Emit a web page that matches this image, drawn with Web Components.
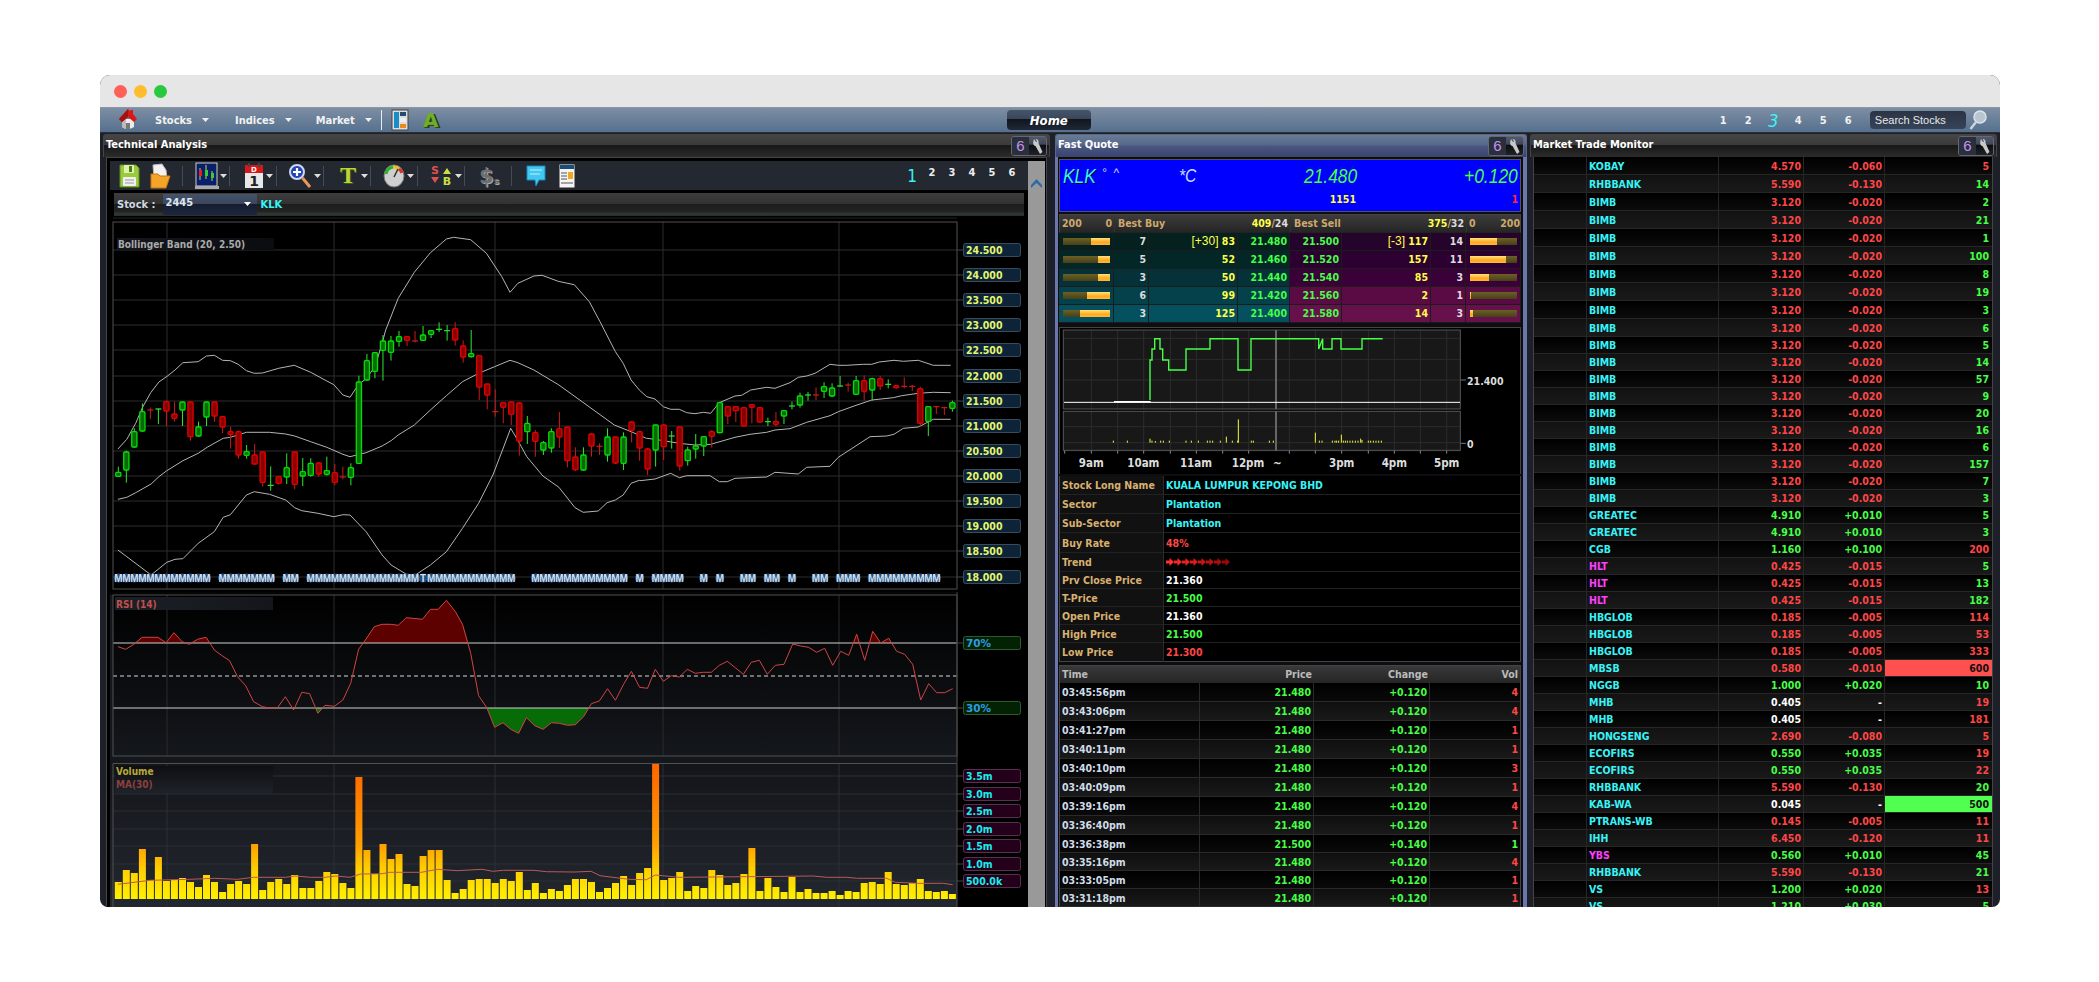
<!DOCTYPE html>
<html><head><meta charset="utf-8"><title>Technical Analysis</title>
<style>
html,body{margin:0;background:#fff;overflow:hidden}
body{padding:75px 0 0 100px;font:bold 10.5px "DejaVu Sans Condensed","DejaVu Sans",sans-serif;color:#ddd}
</style></head><body>
<app-window>
  <nav-bar></nav-bar>
  <panel-row>
    <panel-box label="Technical Analysis" style="width:947px"><ta-body>
      <ta-toolbar></ta-toolbar>
      <stock-row></stock-row>
      <price-chart></price-chart>
      <rsi-chart></rsi-chart>
      <vol-chart></vol-chart>
    </ta-body></panel-box>
    <panel-box label="Fast Quote" variant="blue" style="width:472px;margin-left:5px"><fq-body>
      <quote-head></quote-head>
      <depth-table></depth-table>
      <intraday-chart></intraday-chart>
      <info-table></info-table>
      <trade-table></trade-table>
    </fq-body></panel-box>
    <panel-box label="Market Trade Monitor" style="width:467px;margin-left:3px"><monitor-table></monitor-table></panel-box>
  </panel-row>
</app-window>
<script>
function def(name,css,html){
  customElements.define(name,class extends HTMLElement{
    constructor(){super();const r=this.attachShadow({mode:'open'});
      r.innerHTML='<style>'+css+'</style>'+(typeof html==='function'?html(this):html);}
    connectedCallback(){ if(typeof html==='function'){this.shadowRoot.innerHTML='<style>'+css+'</style>'+html(this);} }
  });
}
const RED='#ff4646',GRN='#46ff46',CY='#38f4f8',YEL='#ffff46',MAG='#ff40ff',TAN='#d8b070';

/* ---------- icons ---------- */
const I={
house:`<svg width="22" height="24" viewBox="0 0 22 24"><path d="M5 11h12v8q-6 4-12 0z" fill="#ececec"/><path d="M5 11h4v10q-2-.5-4-2z" fill="#bbb"/><path d="M9 21v-6h4v6z" fill="#777"/><path d="M11 1l2 2 1-1h2v4l4 5-3 3-6-5-6 5-3-3z" fill="#d81818"/><path d="M11 1L2 11l3 3 6-5z" fill="#a81010"/></svg>`,
panel:`<svg width="18" height="22" viewBox="0 0 18 22"><rect x="1" y="1" width="16" height="20" fill="#ddd" stroke="#444"/><rect x="3" y="3" width="5" height="16" fill="#1a8cc8"/><rect x="9" y="3" width="6" height="4" fill="#2a4a6a"/><rect x="9" y="9" width="6" height="4" fill="#eee"/><rect x="9" y="15" width="6" height="4" fill="#e88a20"/></svg>`,
save:`<svg width="22" height="26" viewBox="0 0 22 26"><path d="M2 2h16l3 3v19H2z" fill="#9acb3c" stroke="#5c8a1e"/><rect x="6" y="2" width="10" height="8" fill="#dff0b0"/><rect x="11" y="3" width="3" height="6" fill="#4f7a18"/><rect x="5" y="14" width="13" height="9" rx="1" fill="#f0f0f0"/><path d="M7 17h9M7 20h9" stroke="#999"/></svg>`,
open:`<svg width="24" height="28" viewBox="0 0 24 28"><path d="M4 3l9-1 4 6 1 9H5z" fill="#f2f2f2" stroke="#bbb"/><path d="M2 26V12h7l2 2h10l-4 12z" fill="#f4a428" stroke="#c47a10"/></svg>`,
chart:`<svg width="24" height="28" viewBox="0 0 24 28"><rect x="1" y="1" width="21" height="23" fill="#0a1f6a" stroke="#ccc"/><path d="M5 6v12M11 3v14M17 9v10" stroke="#d0d040"/><rect x="4" y="8" width="3" height="6" fill="#e02020"/><rect x="10" y="8" width="3" height="6" fill="#30d030"/><rect x="16" y="11" width="3" height="5" fill="#30d030"/><rect x="0" y="24" width="24" height="3" fill="#aaa"/></svg>`,
cal:`<svg width="20" height="28" viewBox="0 0 20 28"><rect x="1" y="8" width="18" height="18" fill="#e8e8e8"/><rect x="1" y="3" width="18" height="8" fill="#d81818"/><rect x="4" y="1" width="2" height="4" fill="#444"/><rect x="14" y="1" width="2" height="4" fill="#444"/><text x="10" y="10" text-anchor="middle" font-size="7" fill="#fff" font-family="DejaVu Sans">D</text><text x="10" y="24" text-anchor="middle" font-size="14" fill="#222" font-family="DejaVu Sans">1</text></svg>`,
zoom:`<svg width="24" height="28" viewBox="0 0 24 28"><circle cx="9" cy="10" r="7" fill="#2244b8" stroke="#cfd8f0" stroke-width="2"/><path d="M9 6v8M5 10h8" stroke="#fff" stroke-width="2.200"/><path d="M14.500 16l7.500 9" stroke="#e89858" stroke-width="3"/></svg>`,
gauge:`<svg width="22" height="24" viewBox="0 0 22 24"><ellipse cx="11" cy="12" rx="10" ry="11" fill="#cfcfcf" stroke="#777"/><path d="M3 10A8.500 8.500 0 0 1 10 3" stroke="#30b030" stroke-width="3" fill="none"/><path d="M10 3A8.500 8.500 0 0 1 16 5" stroke="#e8c020" stroke-width="3" fill="none"/><path d="M16 5A8.500 8.500 0 0 1 19 9" stroke="#e03020" stroke-width="3" fill="none"/><path d="M11 13L15 5" stroke="#333" stroke-width="1.500"/></svg>`,
note:`<svg width="16" height="24" viewBox="0 0 16 24"><rect width="15" height="23" x=".5" y=".5" fill="#f4f4f4"/><rect x="1" y="1" width="14" height="4" fill="#1a4e78"/><path d="M2 9h6M2 12h6M2 15h6M2 19h12" stroke="#555"/><rect x="9" y="8" width="5" height="7" fill="#f0a820"/></svg>`,
bubble:`<svg width="20" height="24" viewBox="0 0 20 24"><path d="M1 2h18v14h-6l-3 6-1-6H1z" fill="#40c8f0" stroke="#1a88c0"/><path d="M4 6h12M4 10h10" stroke="#bff0ff"/></svg>`,
wrench:`<svg width="13" height="17" viewBox="0 0 13 17"><path d="M3 1l2 3 1-.500L4.500 1C7 1 8 3 7.500 5l4 9-2.500 2-4.500-8C3 8 1 6 3 1z" fill="#c8c8c8"/></svg>`,
lens:`<svg width="18" height="20" viewBox="0 0 18 20"><circle cx="11" cy="7" r="6" fill="#b8c4d0" stroke="#dde4ea" stroke-width="1.500"/><path d="M7 12L1.500 19" stroke="#cbd3da" stroke-width="2.500"/></svg>`,
caret:`<svg width="7" height="4" viewBox="0 0 7 4"><path d="M0 0h7L3.500 4z" fill="currentColor"/></svg>`
};

/* ---------- window shell ---------- */
def('app-window',`:host{display:block;width:1900px;height:832px;border-radius:10px 10px 8px 8px;overflow:hidden;background:#1d2028}
.tb{height:32px;background:#e6e6e6;display:flex;align-items:center;gap:7px;padding-left:14px;box-sizing:border-box}
.d{width:13px;height:13px;border-radius:50%}`,
`<div class="tb"><span class="d" style="background:#ff6058"></span><span class="d" style="background:#ffbd2e"></span><span class="d" style="background:#28c940"></span></div><slot></slot>`);

def('nav-bar',`:host{display:flex;align-items:center;height:26px;box-sizing:border-box;border-top:1px solid #8b97a6;border-bottom:1px solid #2a2f38;background:linear-gradient(#7d8ea3,#55708e);color:#f2f2f2;font-size:11px}
.home{margin-left:17px;width:22px;height:24px}
.m{display:flex;align-items:center;gap:8px;white-space:nowrap}
.m svg{color:#eee}
.sep{width:1px;height:20px;background:#e8edf2}
.h{width:84px;height:20px;border-radius:4px;background:linear-gradient(#46546a 0,#3a465a 46%,#11151d 47%,#202838);color:#fff;font-style:italic;font-size:13px;display:flex;align-items:center;justify-content:center;box-sizing:border-box}
.n{display:flex;align-items:center;width:25px;justify-content:center}
.s{width:96px;height:18px;border-radius:4px;background:linear-gradient(#2b3444,#364358);color:#e8e8e8;font-weight:normal;font-size:11px;line-height:18px;padding-left:5px;box-sizing:border-box;font-family:"Liberation Sans",sans-serif}
span.a{font:bold 20px/24px "DejaVu Sans",sans-serif;color:#6fae28;text-shadow:1px 1px 0 #2c4a10,2px 1px 0 #1d330a}`,
`<span class="home">${I.house}</span>
<span class="m" style="margin-left:16px">Stocks <span style="margin-left:2px;display:flex">${I.caret}</span></span>
<span class="m" style="margin-left:26px">Indices <span style="margin-left:2px;display:flex">${I.caret}</span></span>
<span class="m" style="margin-left:24px">Market <span style="margin-left:2px;display:flex">${I.caret}</span></span>
<span class="sep" style="margin-left:9px"></span>
<span style="margin-left:9px;display:flex">${I.panel}</span>
<span class="a" style="margin-left:13px;width:18px;text-align:center">A</span>
<span class="h" style="margin-left:567px">Home</span>
<span style="margin-left:620px;display:flex"><span class="n">1</span><span class="n">2</span><span class="n" style="color:${CY};font-size:18px;font-style:italic;font-weight:normal">3</span><span class="n">4</span><span class="n">5</span><span class="n">6</span></span>
<span class="s" style="margin-left:9px">Search Stocks</span>
<span style="margin-left:3px;display:flex">${I.lens}</span>`);

def('panel-row',`:host{display:flex;padding:1px 3px 0;height:773px}`,`<slot></slot>`);

def('panel-box',`:host{display:flex;flex-direction:column;box-sizing:border-box;flex:none;height:773px;overflow:hidden}
.h{height:23px;flex:none;box-sizing:border-box;display:flex;align-items:flex-start;justify-content:space-between;padding:1px 2px 0 2px;color:#fff;font-size:11px;line-height:17px;border:1px solid #444;border-bottom:0;border-radius:3px 3px 0 0;background:linear-gradient(#454545 0,#3a3a3a 45%,#171717 48%,#2c2c2c 100%)}
:host([variant=blue]) .h{background:linear-gradient(#6a7b96,#56688a 45%,#4a5580 50%,#3a4470);border-color:#5a6888}
.b{display:flex;width:36px;height:20px;box-sizing:border-box;border:1px solid #667;border-radius:3px;overflow:hidden}
.b i{width:17px;text-align:center;font:normal 15px/18px "Liberation Sans",sans-serif;color:#c493ef;background:#2a2f3c}
.b u{flex:1;display:flex;align-items:center;justify-content:center;background:linear-gradient(#50586a,#40485a 40%,#0a0d14 45%,#222)}
.c{flex:1;min-height:0;display:flex;flex-direction:column}`,
h=>`<div class="h"><span class="t">${h.getAttribute('label')||''}</span><span class="b"><i>6</i><u>${I.wrench}</u></span></div><div class="c"><slot></slot></div>`);

/* ---------- technical analysis ---------- */
def('ta-body',`:host{display:flex;flex:1;min-height:0;background:#000;box-sizing:border-box;margin:0 3px;border:1px solid #444;border-bottom:0;padding:3px 1px 0 3px}
.main{width:918px;display:flex;flex-direction:column;flex:none}
.sb{width:17px;background:#999;flex:none;padding-top:17px;box-sizing:border-box;text-align:center}`,
`<div class="main"><slot></slot></div><div class="sb"><svg width="11" height="9" viewBox="0 0 11 9"><path d="M5.500 0L11 6v3L5.500 4 0 9V6z" fill="#2f6aa5"/></svg></div>`);

function toolbar(){
  const sb=`<svg width="22" height="24" viewBox="0 0 22 24"><text x="5" y="10" text-anchor="middle" font-family="DejaVu Sans" font-weight="bold" font-size="11" fill="#e05050">S</text><path d="M1 13h8l-4 6z" fill="#e05050"/><path d="M13 10h8l-4-6z" fill="#c8e040"/><text x="17" y="21" text-anchor="middle" font-family="DejaVu Sans" font-weight="bold" font-size="11" fill="#c8e040">B</text></svg>`;
  const items=[[I.save,129,22],[I.open,161,24],['|',182],[I.chart,207,24],['v',223],['|',229],[I.cal,254,20],['v',269],['|',276],[I.zoom,300,24],['v',317],['|',323],['T',348,18],['v',364],['|',370],[I.gauge,394,22],['v',410],['|',417],[sb,441,22],['v',458],['|',464],['$',489,26],['|',511],[I.bubble,535.5,20],[I.note,567,16]];
  let cur=110,h='';
  for(const it of items){
    const kind=it[0];let w=it[2]||(kind=='v'?7:1),left=it[1]-w/2,ml=left-cur;cur=left+w;
    const st=`margin-left:${ml}px;width:${w}px`;
    if(kind=='|')h+=`<span class="sp" style="${st}"></span>`;
    else if(kind=='v')h+=`<span class="cr" style="${st}">${I.caret}</span>`;
    else if(kind=='T')h+=`<span class="i tt" style="${st}">T</span>`;
    else if(kind=='$')h+=`<span class="i dl" style="${st}">$<small>s</small></span>`;
    else h+=`<span class="i" style="${st}">${kind}</span>`;
  }
  return h+`<span class="nums"><b>1</b><span>2</span><span>3</span><span>4</span><span>5</span><span>6</span></span>`;
}
def('ta-toolbar',`:host{display:flex;align-items:center;height:29px;flex:none;background:#232831;color:#eee;font-size:11px}
.i{display:flex;align-items:center;justify-content:center;flex:none;height:29px}
.cr{display:flex;color:#ddd;flex:none}
.sp{height:20px;background:#454b55;flex:none}
.nums{margin-left:auto;display:flex;margin-right:6px}
.nums span{width:20px;text-align:center}
.nums b{width:20px;text-align:center;color:${CY};font-size:17px;font-weight:normal;line-height:20px}
.tt{font:bold 24px "Liberation Serif",serif;color:#b8d838;text-shadow:1px 1px 0 #4a5a10}
.dl{font:bold 21px "DejaVu Sans",sans-serif;color:#6e6e6e;text-shadow:1px 1px 0 #aaa}
.dl small{font-size:9px;margin-top:10px}`,toolbar);

def('stock-row',`:host{display:flex;align-items:center;height:23px;flex:none;margin:3px 4px 0 4px;background:linear-gradient(#3d3d3d 0,#323232 48%,#1d1d1d 50%,#222 80%,#2d3a36 90%,#2c2c2c);color:#cfd8e2;font-size:11px;box-sizing:border-box}
.s{width:94px;height:21px;margin-left:7px;background:linear-gradient(#44526a,#3a475e 46%,#141c2e 48%,#1e2740);display:flex;align-items:flex-start;justify-content:space-between;padding:2px 6px 0 3px;box-sizing:border-box;color:#dfe6ee;line-height:13px}
.s svg{margin-top:6px;color:#fff}
.k{color:${CY};margin-left:4px}
.l{margin-left:3px}`,
`<span class="l">Stock :</span><span class="s">2445 ${I.caret}</span><span class="k">KLK</span>`);

/* ------ chart data (reading coords from crops) ------ */
const zx6=z=>100+z/2.8, zx7=z=>640+z/3, zy=z=>210+z/3, ry=z=>590+z/3;
const poly=(a,b,y)=>a.map(p=>zx6(p[0]).toFixed(1)+','+y(p[1]).toFixed(1)).concat(b.map(p=>zx7(p[0]).toFixed(1)+','+y(p[1]).toFixed(1))).join(' ');
const UP=poly([[50,717],[75,688],[100,640],[120,590],[142,548],[165,516],[190,497],[210,480],[232,458],[275,455],[298,438],[320,436],[343,451],[365,452],[387,463],[410,482],[432,490],[455,489],[500,475],[544,466],[590,487],[635,513],[655,524],[680,555],[700,562],[723,525],[746,505],[770,470],[790,400],[800,360],[835,265],[880,187],[925,128],[970,87],[990,82],[1038,89],[1082,130],[1125,200],[1148,247],[1170,220],[1215,198],[1238,196],[1283,214],[1328,224],[1370,275],[1400,335],[1443,425],[1465,460],[1487,510],[1510,540]],
[[20,560],[45,567],[70,590],[92,598],[118,598],[140,608],[165,611],[190,607],[212,610],[238,578],[285,558],[305,556],[332,540],[380,532],[405,535],[450,518],[475,502],[500,498],[525,490],[570,463],[595,466],[620,466],[670,463],[695,463],[718,456],[762,451],[790,454],[835,451],[880,466],[932,466]],zy);
const MID=poly([[50,868],[75,862],[100,848],[143,822],[165,800],[187,782],[232,752],[275,730],[300,712],[345,685],[365,682],[410,667],[475,667],[520,672],[545,678],[590,695],[635,712],[680,733],[700,740],[745,728],[790,708],[815,692],[835,675],[880,645],[925,600],[970,557],[1015,515],[1060,490],[1105,470],[1148,451],[1170,458],[1215,480],[1285,525],[1350,575],[1440,645],[1487,665],[1530,685]],
[[20,685],[45,688],[118,700],[165,705],[212,703],[285,682],[330,673],[380,667],[405,660],[450,656],[500,637],[570,617],[595,605],[645,587],[695,570],[760,563],[785,557],[835,550],[880,547],[932,548]],zy);
const LOW=poly([[50,1020],[75,1040],[143,1095],[187,1057],[210,1048],[232,1046],[275,1000],[320,965],[345,922],[365,914],[410,855],[432,845],[475,853],[520,870],[545,893],[565,902],[610,910],[655,920],[680,914],[700,915],[745,965],[790,1035],[815,1065],[860,1094],[880,1097],[925,1065],[970,1025],[1015,955],[1060,880],[1100,795],[1127,720],[1150,655],[1172,695],[1195,740],[1240,798],[1285,832],[1330,893],[1353,907],[1395,903],[1420,878],[1443,870],[1465,855],[1487,820],[1510,811]],
[[0,812],[45,807],[92,790],[118,803],[140,797],[210,797],[238,815],[262,815],[285,805],[380,801],[405,787],[475,792],[500,772],[570,769],[595,742],[690,680],[740,678],[762,673],[790,655],[835,651],[880,628],[932,628]],zy);
const C=`G787,799,770,800 G726,780,722,818 G665,711,655,713 G605,663,580,665 R600,,593,627 G597,,595,642 R575,603,572,648 R612,625,575,635 G576,600,575,648 R576,680,575,692 G651,678,635,680 G576,621,575,648 R576,618,575,635 R620,651,620,670 R665,673,650,716 R665,735,662,746 G725,736,705,746 R735,762,702,764 R726,817,726,830 G826,,769,842 R800,820,798,824 G773,801,730,822 R726,823,726,838 G785,798,744,828 G760,796,745,800 R759,792,757,800 G782,793,740,797 R788,817,762,826 R801,,770,808 G773,802,760,826 G516,760,497,760 G452,510,432,512 G428,484,428,505 G393,421,375,512 G393,427,378,452 G380,394,363,410 R380,391,378,408 R393,,363,398 G375,391,348,393 G362,373,360,384 G358,,337,366 G362,,345,392 R356,390,336,407 R408,441,391,458 G431,440,360,443 R437,531,437,570 R522,555,522,598 R605,,538,620 R578,592,576,640 R576,613,575,645 R579,693,576,737 G640,665,618,702 R668,694,660,740 G698,720,693,735 G665,714,655,728 R656,681,606,714 R651,752,651,772 R741,779,712,783 G735,780,712,782 R672,708,670,740 R709,,700,735 G681,735,655,755 R681,759,680,762 G681,760,667,780 R636,661,634,697 R665,714,663,752 R717,777,714,795 G645,720,645,770 R645,710,643,750 G678,,663,716 R651,768,650,782 G720,752,710,767 G708,717,672,746 G680,708,678,738 R665,679,660,713 G578,668,575,670 R590,618,590,642 R590,602,590,636 R593,648,593,650 R584,592,583,640 R593,636,593,638 G635,,623,648 R635,643,606,650 G602,618,600,642 G588,,575,598 G558,585,548,593 G555,,546,572 R555,,532,570 G530,544,517,564 G534,558,520,560 G528,,498,530 R525,,518,545 G512,553,498,555 R512,544,496,572 G506,540,503,572 R506,528,498,540 G523,,508,535 R527,532,525,537 R529,,502,535 R529,,525,543 R536,640,530,650 G590,634,588,678 R590,,588,612 R593,,590,615 G578,595,572,605`.split(' ');
const cx=i=>118.3+8.02*i;
function candles(){let s='';C.forEach((c,i)=>{const g=c[0]=='G',p=c.slice(1).split(','),x=cx(i),st=g?'#00e000':'#e00000',wk=g?'#2ee82e':'#c81c1c',fill=g?'#0a6a0a':'#8a0000';
  const t=zy(+p[0]),wt=zy(+p[2]),wb=zy(+p[3]);
  s+=`<line x1="${x}" x2="${x}" y1="${wt}" y2="${wb}" stroke="${wk}"/>`;
  if(p[1]===''){s+=`<line x1="${x-3}" x2="${x+3}" y1="${t}" y2="${t}" stroke="${wk}" stroke-width="1.200"/>`;}
  else{const b=zy(+p[1]);s+=`<rect x="${x-2.6}" y="${t}" width="5.200" height="${Math.max(b-t,2)}" rx="1" fill="${fill}" stroke="${st}" stroke-width="1.300"/>`;}
});return s;}
const Ms=[];for(let i=0;i<=11;i++)Ms.push(i);for(let i=13;i<=19;i++)Ms.push(i);Ms.push(21,22);for(let i=24;i<=49;i++)Ms.push(i);for(let i=52;i<=61;i++)Ms.push(i);Ms.push(62,63,65,67,68,69,70,73,75,78,79,81,82,84,87,88,90,91,92);for(let i=94;i<=102;i++)Ms.push(i);
const F='font-family="DejaVu Sans Condensed,DejaVu Sans,sans-serif" font-weight="bold"';

def('price-chart',`:host{display:block;flex:none;height:376px}svg{display:block}`,()=>{
  const prices=['24.500','24.000','23.500','23.000','22.500','22.000','21.500','21.000','20.500','20.000','19.500','19.000','18.500','18.000'];
  const ys=[250,275,300,325,350,376,401,426,451,476,501,526,551,577];
  let g='';ys.forEach(y=>{g+=`<line x1="113" x2="957" y1="${y}" y2="${y}" stroke="#2c2c2c"/><line x1="957" x2="963" y1="${y}" y2="${y}" stroke="#444"/>`});
  [167,334,495,663,839].forEach(x=>{g+=`<line x1="${x}" x2="${x}" y1="222" y2="589" stroke="#2c2c2c"/>`});
  let lab='';prices.forEach((t,i)=>{lab+=`<rect x="963.500" y="${ys[i]-6.5}" width="57" height="13" rx="2" fill="#0d2438" stroke="#3a4c5c"/><text x="966" y="${ys[i]+4}" ${F} font-size="10.5" fill="#e6f56e">${t}</text>`});
  let m='';Ms.forEach(i=>{m+=`<circle cx="${cx(i)}" cy="578" r="4.500" fill="#20507c"/>`});
  Ms.forEach(i=>{m+=`<text x="${cx(i)}" y="581.500" text-anchor="middle" font-family="Liberation Sans,sans-serif" font-size="10" fill="#cfdff0">${i==38?'T':'M'}</text>`});
  return `<svg width="918" height="376" viewBox="110 216 918 376">
  <rect x="110" y="216" width="918" height="376" fill="#000"/>
  <line x1="113" x2="957" y1="218" y2="218" stroke="#222"/>
  ${g}<rect x="113" y="222" width="844" height="367" fill="none" stroke="#505050"/>
  <defs><linearGradient id="lb" x1="0" y1="0" x2="1" y2="0"><stop offset="0" stop-color="#15181e"/><stop offset="1" stop-color="#0a0c10"/></linearGradient></defs>
  <rect x="117" y="238" width="157" height="12" fill="url(#lb)"/>
  <text x="118" y="248" font-family="DejaVu Sans Condensed,DejaVu Sans,sans-serif" font-size="10" fill="#aaa">Bollinger Band (20, 2.50)</text>
  <g fill="none" stroke="#b4b4b4" stroke-width="1"><polyline points="${UP}"/><polyline points="${MID}"/><polyline points="${LOW}"/></g>
  ${candles()}${m}${lab}</svg>`;});

const R1=[[50,170],[72,178],[95,163],[118,142],[162,142],[185,158],[207,128],[230,155],[250,163],[273,148],[297,142],[320,180],[342,197],[363,212],[385,260],[408,287],[430,335],[455,350],[475,354],[497,353],[519,320],[542,360],[565,307],[587,311],[610,370],[630,346],[656,349],[680,330],[702,280],[724,178],[745,147],[768,110],[790,103],[813,103],[835,106],[858,83],[903,88],[925,58],[947,58],[970,31],[995,65],[1015,103],[1038,190],[1060,317],[1083,353],[1105,412],[1128,398],[1150,418],[1172,430],[1194,383],[1217,407],[1241,418],[1264,398],[1286,400],[1309,406],[1331,404],[1354,380],[1376,341],[1398,333],[1421,296],[1443,331],[1466,283],[1488,244],[1511,292],[1533,295]];
const R2=[[46,238],[70,274],[94,257],[118,261],[142,238],[166,250],[190,247],[214,247],[238,226],[262,214],[286,233],[310,253],[334,217],[358,211],[382,253],[406,226],[432,223],[458,162],[482,168],[506,172],[530,187],[554,175],[578,226],[602,184],[626,196],[650,133],[674,211],[698,124],[722,159],[746,145],[770,184],[794,193],[818,223],[842,330],[866,281],[890,308],[914,308],[938,296]];
def('rsi-chart',`:host{display:block;flex:none;height:171px}svg{display:block}`,()=>{
  const pts=poly(R1,R2,ry);
  let g='';[167,334,495,663,839].forEach(x=>{g+=`<line x1="${x}" x2="${x}" y1="595" y2="756" stroke="#2a2a2a"/>`});
  return `<svg width="918" height="171" viewBox="110 592 918 171">
  <defs><linearGradient id="rb" x1="0" y1="0" x2="0" y2="1"><stop offset="0" stop-color="#000"/><stop offset="1" stop-color="#14171c"/></linearGradient>
  <linearGradient id="rl" x1="0" y1="0" x2="1" y2="0"><stop offset="0" stop-color="#1c2026"/><stop offset="1" stop-color="#14161b"/></linearGradient>
  <clipPath id="a"><rect x="113" y="595" width="844" height="48"/></clipPath><clipPath id="b"><rect x="113" y="708" width="844" height="48"/></clipPath></defs>
  <rect x="110" y="592" width="847" height="171" fill="#14171c"/><rect x="110" y="592" width="847" height="3" fill="#050505"/>
  <rect x="957" y="592" width="71" height="171" fill="#000"/>
  <rect x="113" y="595" width="844" height="161" fill="url(#rb)"/>${g}
  <rect x="115" y="597" width="158" height="13" fill="url(#rl)"/>
  <text x="116" y="607.500" font-family="DejaVu Sans Condensed,DejaVu Sans,sans-serif" font-size="10" fill="#c0504d">RSI (14)</text>
  <polygon points="${pts} 953,643 118,643" fill="#5c0000" clip-path="url(#a)"/>
  <polygon points="${pts} 953,708 118,708" fill="#076b07" clip-path="url(#b)"/>
  <line x1="113" x2="957" y1="643" y2="643" stroke="#d0d0d0"/><line x1="113" x2="957" y1="708" y2="708" stroke="#d0d0d0"/>
  <line x1="113" x2="957" y1="676" y2="676" stroke="#d8d8d8" stroke-dasharray="4 3"/>
  <polyline points="${pts}" fill="none" stroke="#d04444"/>
  <rect x="113" y="595" width="844" height="161" fill="none" stroke="#505050"/>
  <line x1="957" x2="963" y1="643" y2="643" stroke="#444"/><line x1="957" x2="963" y1="708" y2="708" stroke="#444"/>
  <line x1="957" x2="957" y1="592" y2="763" stroke="#444"/>
  <rect x="963.500" y="636.500" width="57" height="13" rx="2" fill="#032203" stroke="#2c5a2c"/><text x="966" y="647" font-family="DejaVu Sans,sans-serif" font-weight="bold" font-size="10.500" fill="#2a9ce0">70%</text>
  <rect x="963.500" y="701.500" width="57" height="13" rx="2" fill="#032203" stroke="#2c5a2c"/><text x="966" y="712" font-family="DejaVu Sans,sans-serif" font-weight="bold" font-size="10.500" fill="#2a9ce0">30%</text>
  </svg>`;});

const V=[876,840,849,777,870,801,873,870,864,876,891,855,876,906,882,873,882,762,900,876,867,882,855,894,894,873,846,852,879,894,561,780,852,762,807,792,882,888,798,780,780,870,909,897,870,867,867,879,867,873,846,900,879,909,897,903,885,867,867,876,906,894,879,858,885,849,834,522,870,864,846,903,888,894,840,855,885,879,852,774,903,864,891,906,861,906,897,909,909,903,915,903,906,879,876,882,846,882,885,879,867,903,906,903,912];
const MA1=[[50,883],[140,871],[250,868],[320,865],[385,868],[430,862],[520,862],[545,858],[590,862],[630,862],[660,858],[700,862],[730,852],[790,851],[810,847],[900,847],[945,838],[1000,842],[1070,838],[1100,844],[1130,841],[1215,841],[1250,845],[1330,846],[1375,844],[1400,857],[1480,868],[1530,869]];
const MA2=[[46,855],[118,862],[320,860],[520,858],[560,862],[620,862],[650,865],[740,865],[766,877],[835,880],[910,880],[938,884]];
def('vol-chart',`:host{display:block;flex:none;height:144px}svg{display:block}`,()=>{
  let b='';V.forEach((z,i)=>{const y=ry(z);b+=`<rect x="${(cx(i)-3.5).toFixed(1)}" y="${y.toFixed(1)}" width="7" height="${(899-y).toFixed(1)}" fill="url(#vb)"/>`});
  const ylab=[776,794,811,829,846,864,881],t=['3.5m','3.0m','2.5m','2.0m','1.5m','1.0m','500.0k'];
  let g='',l='';ylab.forEach((y,i)=>{g+=`<line x1="113" x2="957" y1="${y}" y2="${y}" stroke="#2b2e36"/><line x1="957" x2="963" y1="${y}" y2="${y}" stroke="#444"/>`;
    l+=`<rect x="963.500" y="${y-6.5}" width="57" height="13" rx="2" fill="#24001a" stroke="#553350"/><text x="966" y="${y+4}" ${F} font-size="10.500" fill="#14eeee">${t[i]}</text>`});
  [167,334,495,663,839].forEach(x=>{g+=`<line x1="${x}" x2="${x}" y1="763" y2="907" stroke="#2b2e36"/>`});
  return `<svg width="918" height="144" viewBox="110 763 918 144">
  <defs><linearGradient id="vg" x1="0" y1="0" x2="0" y2="1"><stop offset="0" stop-color="#131519"/><stop offset="1" stop-color="#23272f"/></linearGradient>
  <linearGradient id="vb" gradientUnits="userSpaceOnUse" x1="0" y1="770" x2="0" y2="899"><stop offset="0" stop-color="#ff6800"/><stop offset=".58" stop-color="#ffa000"/><stop offset=".78" stop-color="#ffd000"/><stop offset="1" stop-color="#fff000"/></linearGradient>
  <linearGradient id="vl" x1="0" y1="0" x2="0" y2="1"><stop offset="0" stop-color="#0e0f13"/><stop offset="1" stop-color="#1f2229"/></linearGradient></defs>
  <rect x="110" y="763" width="847" height="144" fill="url(#vg)"/><rect x="957" y="763" width="71" height="144" fill="#000"/>${g}
  <rect x="115" y="766" width="158" height="27" fill="url(#vl)"/>
  <text x="116" y="775" font-family="DejaVu Sans Condensed,DejaVu Sans,sans-serif" font-size="10" fill="#b8a838">Volume</text>
  <text x="116" y="788" font-family="DejaVu Sans Condensed,DejaVu Sans,sans-serif" font-size="10" fill="#8c4040">MA(30)</text>
  ${b}<polyline points="${poly(MA1,MA2,ry)}" fill="none" stroke="#b85a5a"/>
  <path d="M113 907V763.500H957V907" fill="none" stroke="#505050"/>${l}
  </svg>`;});

/* ---------- fast quote ---------- */
def('fq-body',`:host{display:flex;flex-direction:column;flex:1;min-height:0;box-sizing:border-box;background:#0e0e12;border-left:3px solid #6b77aa;border-right:4px solid #6b77aa;padding:2px 2px 0 1px}`,`<slot></slot>`);
def('quote-head',`:host{display:block;flex:none;height:53px;box-sizing:border-box;background:#0000ff;border:1px solid #555;font-family:"Liberation Sans",sans-serif;font-weight:normal}
.r{display:grid;align-items:center}
.r1{grid-template-columns:116px 80px 98px 161px;height:33px;padding-left:3px}
.big{font-style:italic;font-size:20px;display:inline-block;transform-origin:right center;transform:scaleX(.87);white-space:nowrap}
.r2{display:flex;height:18px;font:bold 10.5px "DejaVu Sans Condensed","DejaVu Sans",sans-serif}`,
`<div class="r r1"><span><span class="big" style="color:${CY};font-size:20px;transform-origin:left center;text-shadow:1px 1px 0 #003">KLK</span><span style="color:#c8d8ff;font-size:12px;vertical-align:6px;margin-left:-2px"> °&nbsp;&nbsp;^</span></span><span class="big" style="color:#c4dcff;font-size:18px;transform-origin:left center;justify-self:start">*C</span><span class="big" style="color:${GRN};justify-self:end">21.480</span><span class="big" style="color:${GRN};justify-self:end">+0.120</span></div>
<div class="r2"><span style="width:296px;text-align:right;color:${YEL}">1151</span><span style="flex:1;text-align:right;color:#ff2830;padding-right:2px">1</span></div>`);

def('depth-table',`:host{display:block;flex:none;height:109px;margin-top:2px;box-sizing:border-box;background:#222}
.rw,.hd{display:grid;grid-template-columns:55px 35px 89px 52px 52px 89px 35px 55px}
.hd{height:19px;background:linear-gradient(#3c3c3c,#252525);color:#cfa96c;line-height:17px;border:1px solid #444;border-bottom:1px solid #222;box-sizing:border-box}
.hd>span{padding:0 2px;white-space:nowrap;box-sizing:border-box;display:flex;justify-content:space-between;border-right:1px solid #333}
.rw{height:18px;line-height:17px}
.rw>span{box-sizing:border-box;text-align:right;padding-right:2px;border-right:1px solid #1c1c1c;border-bottom:1px solid #1c1c1c;white-space:nowrap}
.bar{display:flex!important;align-items:center;padding:0 3px 0 4px!important}
.bar i{display:flex;flex:1;height:7px;background:linear-gradient(#6e6025,#45401a)}
.bar b{display:block;height:7px;background:linear-gradient(#ffe27a,#ffa820 60%,#ffb838)}
.n{font:normal 12px "Liberation Sans",sans-serif}`,
()=>{
 const L=['#04201f','#032626','#043238','#04414b','#05505e'],Rr=['#25042c','#2c0030','#3a0038','#5a0b44','#66104c'];
 const rows=[[19,7,'[+30]','83','21.480','21.500','[-3]','117','14',27],[12,5,'','52','21.460','21.520','','157','11',36],[12,3,'','50','21.440','21.540','','85','3',19],[23,6,'','99','21.420','21.560','','2','1',1],[30,3,'','125','21.400','21.580','','14','3',3]];
 let h=`<div class="hd"><span>200<span>0</span></span><span style="grid-column:2/5;padding-left:3px"><span>Best Buy</span><span><span style="color:${YEL}">409</span>/<span style="color:#ddd">24</span></span></span><span style="grid-column:5/8;padding-left:3px"><span>Best Sell</span><span><span style="color:${YEL}">375</span>/<span style="color:#ddd">32</span></span></span><span style="border:0">0<span>200</span></span></div>`;
 rows.forEach((r,i)=>{const l=L[i],k=Rr[i];
  h+=`<div class="rw"><span class="bar" style="background:${l}"><i style="justify-content:flex-end"><b style="width:${r[0]}px"></b></i></span>
  <span style="background:${l};color:#ddd">${r[1]}</span>
  <span style="background:${l};color:${YEL}">${r[2]?`<span class="n">${r[2]}</span> `:''}${r[3]}</span>
  <span style="background:${l};color:${GRN}">${r[4]}</span>
  <span style="background:${k};color:${GRN}">${r[5]}</span>
  <span style="background:${k};color:${YEL}">${r[6]?`<span class="n">${r[6]}</span> `:''}${r[7]}</span>
  <span style="background:${k};color:#ddd">${r[8]}</span>
  <span class="bar" style="background:${k}"><i><b style="width:${r[9]}px"></b></i></span></div>`});
 return h;});

def('intraday-chart',`:host{display:block;flex:none;height:147px;margin-top:4px}svg{display:block}`,()=>{
 const X=z=>(1050+z/3),Y=z=>(130+z/3);
 const G=[[300,810],[300,690],[306,690],[306,657],[314,657],[314,626],[330,626],[330,657],[338,657],[338,690],[356,690],[356,720],[408,720],[408,657],[480,657],[480,626],[564,626],[564,720],[603,720],[603,626],[806,626],[806,657],[818,626],[818,657],[846,657],[846,626],[873,626],[873,657],[936,657],[936,626],[998,626]].map(p=>X(p[0]).toFixed(1)+','+Y(p[1]).toFixed(1)).join(' ');
 const vx=[124,203,281,361,439,518,596,718,796,875,955,1033,1111,1190];
 let g='';vx.forEach(z=>{g+=`<line x1="${X(z)}" x2="${X(z)}" y1="${Y(600)}" y2="${Y(838)}" stroke="#2c2c2c"/><line x1="${X(z)}" x2="${X(z)}" y1="${Y(844)}" y2="${Y(962)}" stroke="#2c2c2c"/>`});
 [625,688,750].forEach(z=>{g+=`<line x1="${X(40)}" x2="${X(1232)}" y1="${Y(z)}" y2="${Y(z)}" stroke="#2c2c2c"/>`});
 [890,938].forEach(z=>{g+=`<line x1="${X(40)}" x2="${X(1232)}" y1="${Y(z)}" y2="${Y(z)}" stroke="#2c2c2c"/>`});
 const v=[[190,6],[232,6],[300,12],[306,6],[316,5],[332,6],[340,6],[358,6],[408,6],[424,6],[445,6],[472,6],[480,6],[488,6],[511,6],[529,18],[547,6],[563,6],[565,70],[604,6],[610,6],[658,6],[670,6],[796,30],[808,6],[816,6],[847,6],[855,6],[860,6],[866,6],[874,24],[880,6],[886,6],[892,6],[900,6],[908,6],[916,6],[924,6],[932,12],[936,8],[955,6],[962,6],[970,6],[978,6],[986,6],[994,6]];
 let b='';v.forEach(p=>{b+=`<line x1="${X(p[0])}" x2="${X(p[0])}" y1="${Y(938-p[1])}" y2="${Y(938)}" stroke="#f8f840"/>`});
 let tk='';[44,124,203,281,361,439,518,596,718,796,875,955,1033,1111,1190].forEach(z=>{tk+=`<line x1="${X(z)}" x2="${X(z)}" y1="${Y(962)}" y2="${Y(971)}" stroke="#888"/>`});
 const tl=[['9am',124],['10am',280],['11am',438],['12pm',594],['~',682],['3pm',875],['4pm',1033],['5pm',1190]];
 let t='';tl.forEach(p=>{t+=`<text x="${X(p[1])}" y="467" text-anchor="middle" ${F} font-size="11.500" fill="#ddd">${p[0]}</text>`});
 return `<svg width="462" height="147" viewBox="1059 327 462 147">
 <rect x="1059.500" y="327.500" width="461" height="147" fill="#000" stroke="#444"/>
 <rect x="${X(40)}" y="${Y(600)}" width="397" height="79" fill="#181818"/><rect x="${X(40)}" y="${Y(844)}" width="397" height="40" fill="#181818"/>${g}
 <rect x="${X(40)}" y="${Y(600)}" width="397" height="79" fill="none" stroke="#555"/><rect x="${X(40)}" y="${Y(844)}" width="397" height="39" fill="none" stroke="#555"/>
 <line x1="${X(678)}" x2="${X(678)}" y1="${Y(600)}" y2="${Y(838)}" stroke="#666" stroke-width="2"/><line x1="${X(678)}" x2="${X(678)}" y1="${Y(844)}" y2="${Y(962)}" stroke="#666" stroke-width="2"/>
 <line x1="${X(42)}" x2="${X(1230)}" y1="${Y(817)}" y2="${Y(817)}" stroke="#fff"/><line x1="${X(192)}" x2="${X(302)}" y1="${Y(815)}" y2="${Y(815)}" stroke="#fff" stroke-width="1.500"/>
 <polyline points="${G}" fill="none" stroke="#46ff46" stroke-width="1.400"/>${b}${tk}
 <line x1="${X(1232)}" x2="${X(1248)}" y1="${Y(750)}" y2="${Y(750)}" stroke="#777"/><line x1="${X(1232)}" x2="${X(1248)}" y1="${Y(940)}" y2="${Y(940)}" stroke="#777"/>
 <text x="1467" y="385" ${F} font-size="10.500" fill="#ddd">21.400</text><text x="1467" y="448" ${F} font-size="10.500" fill="#ddd">0</text>${t}</svg>`;});

def('info-table',`:host{display:block;flex:none;height:186px;margin-top:2px;border-left:1px solid #444;border-right:1px solid #444;box-sizing:border-box;background:#000}
.rw{display:grid;grid-template-columns:104px 1fr}
.rw>span{box-shadow:inset 0 -1px #222}
.rw:first-child>span{box-shadow:inset 0 1px #444,inset 0 -1px #222}
.rw:last-child>span{box-shadow:inset 0 -1px #444}
.l{background:#111;color:${TAN};padding-left:2px;border-right:1px solid #2a2a2a}
.v{padding-left:2px;background:#000}
svg{display:block;margin-top:5px}`,()=>{
 const rows=[['Stock Long Name','KUALA LUMPUR KEPONG BHD',CY,19],['Sector','Plantation',CY,19],['Sub-Sector','Plantation',CY,19],['Buy Rate','48%',RED,20],['Trend','@',RED,19],['Prv Close Price','21.360','#fff',17],['T-Price','21.500',GRN,18],['Open Price','21.360','#fff',18],['High Price','21.500',GRN,18],['Low Price','21.300',RED,19]];
 let ar='<svg width="66" height="8" viewBox="0 0 66 8">';const cl=['#ff3030','#f22828','#e52222','#d81c1c','#c81616','#b81212','#a80e0e','#980a0a'];
 cl.forEach((c,i)=>{const x=i*8;ar+=`<path d="M${x} 2.500h3.500V0L${x+8} 4l-4.500 4V5.500H${x}z" fill="${c}"/>`});ar+='</svg>';
 return rows.map(r=>`<div class="rw" style="height:${r[3]}px;line-height:${r[3]}px"><span class="l">${r[0]}</span><span class="v" style="color:${r[2]}">${r[1]=='@'?ar:r[1]}</span></div>`).join('');});

def('trade-table',`:host{display:block;flex:none;margin-top:3px;border-left:1px solid #444;border-right:1px solid #444;box-sizing:border-box}
.rw{display:grid;grid-template-columns:140px 114px 116px 1fr;box-sizing:border-box}
.rw>span{text-align:right;padding-right:2px;border-right:1px solid #2a2a2a;box-shadow:inset 0 -1px #2a2a2a}
.rw>span:first-child{text-align:left;padding-left:2px;color:#cfdce8}
.rw>span:last-child{border-right:0}
.h{height:18px;line-height:16px;padding-top:1px;background:linear-gradient(#3a3a3a,#252525);box-shadow:inset 0 1px #444;color:#bbb}
.h>span{border:0!important;color:#bbb!important;box-shadow:none}`,()=>{
 const rows=[['03:45:56pm','21.480','+0.120','4',RED],['03:43:06pm','21.480','+0.120','4',RED],['03:41:27pm','21.480','+0.120','1',RED],['03:40:11pm','21.480','+0.120','1',RED],['03:40:10pm','21.480','+0.120','3',RED],['03:40:09pm','21.480','+0.120','1',RED],['03:39:16pm','21.480','+0.120','4',RED],['03:36:40pm','21.480','+0.120','1',RED],['03:36:38pm','21.500','+0.140','1',GRN],['03:35:16pm','21.480','+0.120','4',RED],['03:33:05pm','21.480','+0.120','1',RED],['03:31:18pm','21.480','+0.120','1',RED]];
 return `<div class="rw h"><span>Time</span><span>Price</span><span>Change</span><span>Vol</span></div>`+rows.map((r,i)=>{const h=i<8?19:18;const bg=i%2?'linear-gradient(#0f0f0f,#1a1a1a)':'linear-gradient(#000,#0a0a0a)';
 return `<div class="rw" style="height:${h}px;line-height:${h}px;background:${bg}"><span>${r[0]}</span><span style="color:${GRN}">${r[1]}</span><span style="color:${GRN}">${r[2]}</span><span style="color:${r[4]}">${r[3]}</span></div>`}).join('');});

/* ---------- market monitor ---------- */
def('monitor-table',`:host{display:block;flex:1;min-height:0;margin:0 4px 0 3px;background:#000;border-left:1px solid #444;border-right:1px solid #444;box-sizing:border-box;overflow:hidden}
.rw{display:grid;grid-template-columns:53px 132px 85px 81px 1fr;box-sizing:border-box}
.rw>span{text-align:right;padding-right:2px;border-right:1px solid #262626;box-sizing:border-box;box-shadow:inset 0 -1px #262626}
.rw>span:nth-child(2){text-align:left;padding-left:2px}
.rw>span:last-child{border-right:0;padding-right:3px}`,()=>{
 const B=n=>['BIMB','3.120','-0.020',n,'g'];
 const rows=[['KOBAY','4.570','-0.060','5','r'],['RHBBANK','5.590','-0.130','14','g'],...[2,21,1,100,8,19,3,6,5,14,57,9,20,16,6,157,7,3].map(B),['GREATEC','4.910','+0.010','5','g'],['GREATEC','4.910','+0.010','3','g'],['CGB','1.160','+0.100','200','r'],['HLT','0.425','-0.015','5','g',1],['HLT','0.425','-0.015','13','g',1],['HLT','0.425','-0.015','182','g',1],['HBGLOB','0.185','-0.005','114','r'],['HBGLOB','0.185','-0.005','53','r'],['HBGLOB','0.185','-0.005','333','r'],['MBSB','0.580','-0.010','600','R'],['NGGB','1.000','+0.020','10','g'],['MHB','0.405','-','19','r'],['MHB','0.405','-','181','r'],['HONGSENG','2.690','-0.080','5','r'],['ECOFIRS','0.550','+0.035','19','r'],['ECOFIRS','0.550','+0.035','22','r'],['RHBBANK','5.590','-0.130','20','g'],['KAB-WA','0.045','-','500','G'],['PTRANS-WB','0.145','-0.005','11','r'],['IHH','6.450','-0.120','11','r'],['YBS','0.560','+0.010','45','g',1],['RHBBANK','5.590','-0.130','21','g'],['VS','1.200','+0.020','13','r'],['VS','1.210','+0.030','5','g']];
 return rows.map((r,i)=>{const h=i<10?18:17,c=r[2]=='-'?'#fff':r[2][0]=='+'?GRN:RED,bg=i%2?'linear-gradient(#121212,#1a1a1a)':'linear-gradient(#000,#0c0c0c)';
 const vs=r[4]=='r'?`color:${RED}`:r[4]=='g'?`color:${GRN}`:r[4]=='R'?'background:#ff5050;color:#111':'background:#50ff50;color:#111';
 return `<div class="rw" style="height:${h}px;line-height:${h}px;background:${bg}"><span></span><span style="color:${r[5]?MAG:CY}">${r[0]}</span><span style="color:${c}">${r[1]}</span><span style="color:${r[2]=='-'?'#fff':c}">${r[2]}</span><span style="${vs}">${r[3]}</span></div>`}).join('');});
</script>
</body></html>
